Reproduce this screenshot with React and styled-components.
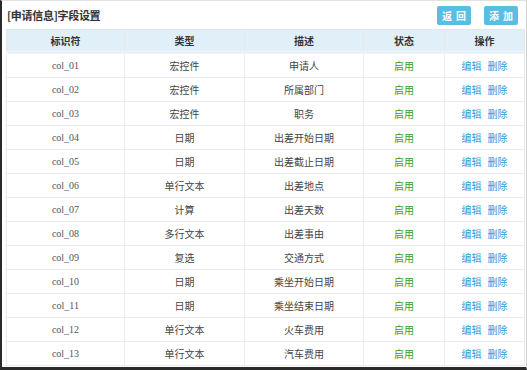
import React from 'react';
import styled, { createGlobalStyle } from 'styled-components';

const Global = createGlobalStyle`
    html, body { margin: 0; padding: 0; background: #fff; }
    body { font-family: 'Noto Sans CJK SC', 'Noto Sans', sans-serif; }
`;

const Frame = styled.div`
    width: 527px;
    height: 370px;
    box-sizing: border-box;
    overflow: hidden;
    border-top: 1px solid #e2e2e2;
    border-right: 1px solid #d0d0d0;
    border-left: 2px solid #2a2a2a;
    border-bottom: 3px solid #2a2a2a;
    background: #fff;
`;

const Bar = styled.div`
    display: flex;
    align-items: center;
    justify-content: space-between;
    height: 28px;
    padding: 0 8px 0 5px;
`;

const Title = styled.h1`
    margin: 0;
    font-size: 11px;
    font-weight: bold;
    color: #333;
    letter-spacing: -0.3px;
`;

const Actions = styled.div`
    display: flex;
    gap: 13px;
    padding-top: 1px;
`;

const Btn = styled.button`
    width: 34px;
    height: 19px;
    border: none;
    border-radius: 2px;
    background: #5cbde2;
    color: #fff;
    font-family: 'Noto Sans CJK SC', sans-serif;
    font-size: 10px;
    font-weight: bold;
    white-space: nowrap;
    letter-spacing: 4px;
    padding: 0 0 0 4px;
`;

const Table = styled.table`
    margin-left: 4px;
    width: 513px;
    border-collapse: collapse;
    table-layout: fixed;
    font-size: 10px;
    color: #444;
`;

const Th = styled.th`
    height: 21px;
    padding: 0;
    background: #e0eff8;
    border: 1px solid #e4e8ea;
    border-bottom: 3px double #eef4f8;
    font-weight: bold;
    color: #333;
    width: ${p => p.w}px;
`;

const Td = styled.td`
    height: 23px;
    padding: 0;
    text-align: center;
    border: 1px solid #ebebeb;
    font-weight: normal;
    font-family: ${p => p.mono ? "'Liberation Serif', serif" : "'Noto Sans CJK SC', sans-serif"};
    font-size: 10px;
    color: ${p => p.mono ? '#555' : '#444'};
`;

const On = styled.span`
    color: #3aa02a;
`;

const Link = styled.a`
    color: #3899d6;
    margin: 0 3px;
    text-decoration: none;
`;

const rows = [
    ['col_01', '宏控件', '申请人'],
    ['col_02', '宏控件', '所属部门'],
    ['col_03', '宏控件', '职务'],
    ['col_04', '日期', '出差开始日期'],
    ['col_05', '日期', '出差截止日期'],
    ['col_06', '单行文本', '出差地点'],
    ['col_07', '计算', '出差天数'],
    ['col_08', '多行文本', '出差事由'],
    ['col_09', '复选', '交通方式'],
    ['col_10', '日期', '乘坐开始日期'],
    ['col_11', '日期', '乘坐结束日期'],
    ['col_12', '单行文本', '火车费用'],
    ['col_13', '单行文本', '汽车费用'],
];

const App = () => (
    <Frame>
        <Global />
        <Bar>
            <Title>[申请信息]字段设置</Title>
            <Actions>
                <Btn>返回</Btn>
                <Btn>添加</Btn>
            </Actions>
        </Bar>
        <Table>
            <thead>
                <tr>
                    <Th w={117}>标识符</Th>
                    <Th w={119}>类型</Th>
                    <Th w={118}>描述</Th>
                    <Th w={80}>状态</Th>
                    <Th w={79}>操作</Th>
                </tr>
            </thead>
            <tbody>
                {rows.map(r => (
                    <tr key={r[0]}>
                        <Td mono>{r[0]}</Td>
                        <Td>{r[1]}</Td>
                        <Td>{r[2]}</Td>
                        <Td><On>启用</On></Td>
                        <Td><Link>编辑</Link><Link>删除</Link></Td>
                    </tr>
                ))}
            </tbody>
        </Table>
    </Frame>
);

export default App;
